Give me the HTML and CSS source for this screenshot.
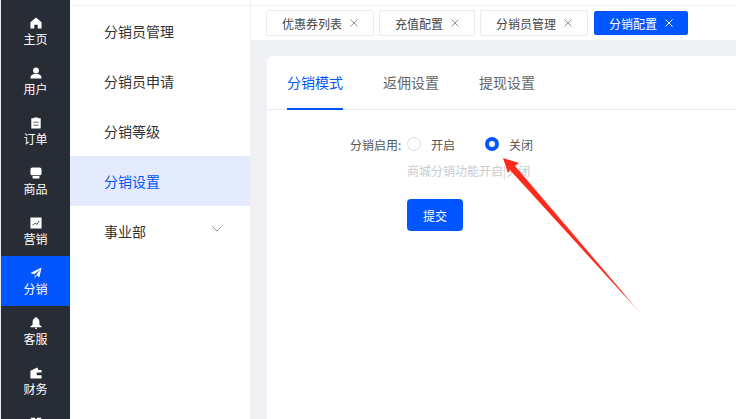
FILE: index.html
```html
<!DOCTYPE html>
<html lang="zh-CN">
<head>
<meta charset="utf-8">
<title>分销配置</title>
<link rel="stylesheet" href="styles.css">
</head>
<body>
<div class="app">
  <nav class="rail">
    <a class="rail-item"><svg class="ico" viewBox="0 0 14 14"><path d="M7 0.5 L13.5 6 V13.5 H9 V9 H5 V13.5 H0.5 V6 Z"/></svg><span>主页</span></a>
    <a class="rail-item"><svg class="ico" viewBox="0 0 14 14"><circle cx="7" cy="4" r="3.4"/><path d="M0.5 13.5 C0.5 9 4 8 7 8 S13.5 9 13.5 13.5 Z"/></svg><span>用户</span></a>
    <a class="rail-item"><svg class="ico" viewBox="0 0 14 14"><path fill-rule="evenodd" d="M1.5 1.5 H4.5 V0.5 H9.5 V1.5 H12.5 V13.5 H1.5 Z M4 5.5 V6.5 H10 V5.5 Z M4 9 V10 H10 V9 Z"/></svg><span>订单</span></a>
    <a class="rail-item"><svg class="ico" viewBox="0 0 14 14"><path d="M3 0.5 H11 Q13.5 0.5 13.5 3 V8 Q13.5 9.5 12 9.5 H2 Q0.5 9.5 0.5 8 V3 Q0.5 0.5 3 0.5 Z M3 10.5 H11 V13.5 H3 Z"/></svg><span>商品</span></a>
    <a class="rail-item"><svg class="ico" viewBox="0 0 14 14"><path fill-rule="evenodd" d="M0.5 0.5 H13.5 V13.5 H0.5 Z M3 10 L6 8 L8 9 L11 5 L10.4 4.5 L7.8 7.8 L6 7 L2.6 9.2 Z"/></svg><span>营销</span></a>
    <a class="rail-item is-active"><svg class="ico" viewBox="0 0 14 14"><path d="M13.5 0.5 L11 12 L7 9.5 L12 3 L5 8.5 L0.5 7 Z M5.5 9.5 L7 10.5 L5.5 13.5 Z"/></svg><span>分销</span></a>
    <a class="rail-item"><svg class="ico" viewBox="0 0 14 14"><path d="M7 0 Q8 0 8 1.2 Q11 2.2 11 6 V9 L13.5 11 V12 H0.5 V11 L3 9 V6 Q3 2.2 6 1.2 Q6 0 7 0 Z M5.5 12.5 H8.5 Q8 14 7 14 T5.5 12.5 Z"/></svg><span>客服</span></a>
    <a class="rail-item"><svg class="ico" viewBox="0 0 14 14"><path fill-rule="evenodd" d="M0.5 4.5 L8.5 0.5 L10 3.5 H13.5 V13.5 H0.5 Z M9 6.5 A1.5 1.5 0 0 0 9 9.5 H13.5 V6.5 Z"/></svg><span>财务</span></a>
    <a class="rail-item"><svg class="ico" viewBox="0 0 14 14"><path d="M1 1 H6 V6 H1 Z M8 1 H13 V6 H8 Z M1 8 H13 V13 H1 Z"/></svg></a>
  </nav>

  <aside class="submenu">
    <a class="sub-item">分销员管理</a>
    <a class="sub-item">分销员申请</a>
    <a class="sub-item">分销等级</a>
    <a class="sub-item is-active">分销设置</a>
    <a class="sub-item">事业部<svg class="chev" viewBox="0 0 10 6"><path d="M0.5 0.5 L5 5 L9.5 0.5"/></svg></a>
  </aside>

  <main class="main">
    <div class="tabs-bar">
      <div class="tag">优惠券列表<svg class="x" viewBox="0 0 8 8"><path d="M0.5 0.5 L7.5 7.5 M7.5 0.5 L0.5 7.5"/></svg></div>
      <div class="tag">充值配置<svg class="x" viewBox="0 0 8 8"><path d="M0.5 0.5 L7.5 7.5 M7.5 0.5 L0.5 7.5"/></svg></div>
      <div class="tag">分销员管理<svg class="x" viewBox="0 0 8 8"><path d="M0.5 0.5 L7.5 7.5 M7.5 0.5 L0.5 7.5"/></svg></div>
      <div class="tag is-active">分销配置<svg class="x" viewBox="0 0 8 8"><path d="M0.5 0.5 L7.5 7.5 M7.5 0.5 L0.5 7.5"/></svg></div>
    </div>
    <div class="content">
      <section class="card">
        <div class="card-tabs">
          <span class="card-tab is-active">分销模式</span>
          <span class="card-tab">返佣设置</span>
          <span class="card-tab">提现设置</span>
        </div>
        <form class="form">
          <div class="form-row">
            <span class="form-label">分销启用:</span>
            <div class="radio-group">
              <span class="radio"><i class="dot"></i>开启</span>
              <span class="radio is-on"><i class="dot"></i>关闭</span>
            </div>
          </div>
          <p class="hint">商城分销功能开启|关闭</p>
          <span class="submit">提交</span>
        </form>
      </section>
    </div>
  </main>

  <svg class="arrow" viewBox="0 0 736 419" width="736" height="419">
    <defs>
      <linearGradient id="fade" gradientUnits="userSpaceOnUse" x1="503" y1="158" x2="642" y2="315">
        <stop offset="0" stop-color="#ff2a1c"/>
        <stop offset="0.85" stop-color="#ff2a1c"/>
        <stop offset="1" stop-color="#ff2a1c" stop-opacity="0.15"/>
      </linearGradient>
    </defs>
    <polygon fill="url(#fade)" points="503,158 519,163 515,166 527,180 643,316 520,181 510,170 508,173"/>
  </svg>
</div>
</body>
</html>
```

FILE: styles.css
```css
* { box-sizing: border-box; }
html, body { margin: 0; height: 100%; }
body {
  overflow: hidden;
  background: #fff;
  color: #333;
  font-family: "Noto Sans CJK SC", "Liberation Sans", sans-serif;
  font-size: 12px;
}
.app {
  position: relative;
  display: flex;
  width: 736px;
  height: 419px;
  overflow: hidden;
}
.rail {
  flex: none;
  width: 70px;
  height: 419px;
  padding-top: 6px;
  border-left: 1px solid #e8eaf0;
  background: #282c35;
  overflow: hidden;
}
.rail-item {
  display: flex;
  flex-direction: column;
  align-items: center;
  height: 50px;
  padding-top: 11px;
  color: #fff;
  line-height: 16px;
}
.rail-item.is-active { background: #0256ff; }
.ico { display: block; width: 12px; height: 12px; margin-bottom: 2px; fill: #fff; }
.submenu {
  flex: none;
  width: 181px;
  padding-top: 6px;
  border-right: 1px solid #eef0f4;
  background: linear-gradient(#eef0f4, #eef0f4) 0 5px / 100% 1px no-repeat #fff;
}
.sub-item {
  display: flex;
  align-items: center;
  justify-content: space-between;
  height: 50px;
  padding: 0 28px 0 34px;
  color: #333;
  font-size: 14px;
}
.sub-item.is-active { background: #e3ebfd; color: #0256ff; }
.chev { width: 10px; height: 6px; margin-top: -4px; fill: none; stroke: #8d949e; stroke-width: 1; }
.main { flex: 1; display: flex; flex-direction: column; min-width: 0; }
.tabs-bar {
  flex: none;
  display: flex;
  align-items: center;
  gap: 5px;
  height: 40px;
  padding: 6px 0 0 15px;
  background: linear-gradient(#eef0f4, #eef0f4) 0 5px / 100% 1px no-repeat #fff;
}
.tag {
  display: flex;
  align-items: center;
  height: 26px;
  padding: 0 15px;
  border: 1px solid #e8eaf0;
  border-radius: 2px;
  color: #444;
  white-space: nowrap;
}
.tag.is-active {
  height: 24px;
  margin-left: 1px;
  padding: 0 14px;
  border-color: #0256ff;
  background: #0256ff;
  color: #fff;
}
.x { width: 8px; height: 8px; margin-left: 8px; fill: none; stroke: #8497ab; stroke-width: 1; }
.tag.is-active .x { stroke: #fff; }
.content {
  flex: 1;
  padding: 16px 0 0 16px;
  background: #f0f1f5;
}
.card {
  height: 100%;
  border-radius: 6px 0 0 0;
  background: #fff;
}
.card-tabs {
  display: flex;
  gap: 40px;
  height: 54px;
  padding-left: 20px;
  border-bottom: 1px solid #e8eaf0;
}
.card-tab {
  height: 54px;
  color: #666;
  font-size: 14px;
  line-height: 52px;
}
.card-tab.is-active {
  border-bottom: 2px solid #0256ff;
  color: #0256ff;
}
.form { padding: 26px 0 0 83px; }
.form-row { display: flex; align-items: center; height: 16px; }
.form-label { width: 57px; color: #555; white-space: nowrap; }
.radio-group { display: flex; gap: 30px; }
.radio { display: flex; align-items: center; gap: 10px; color: #555; }
.dot {
  width: 14px;
  height: 14px;
  border: 1px solid #dcdfe6;
  border-radius: 50%;
  background: #fff;
}
.is-on .dot { border: 4px solid #0256ff; }
.hint { margin: 11px 0 0 57px; color: #c9cbd0; line-height: 16px; }
.submit {
  display: flex;
  align-items: center;
  justify-content: center;
  width: 56px;
  height: 32px;
  margin: 20px 0 0 57px;
  border-radius: 4px;
  background: #0256ff;
  color: #fff;
}
.arrow { position: absolute; left: 0; top: 0; pointer-events: none; }
```
